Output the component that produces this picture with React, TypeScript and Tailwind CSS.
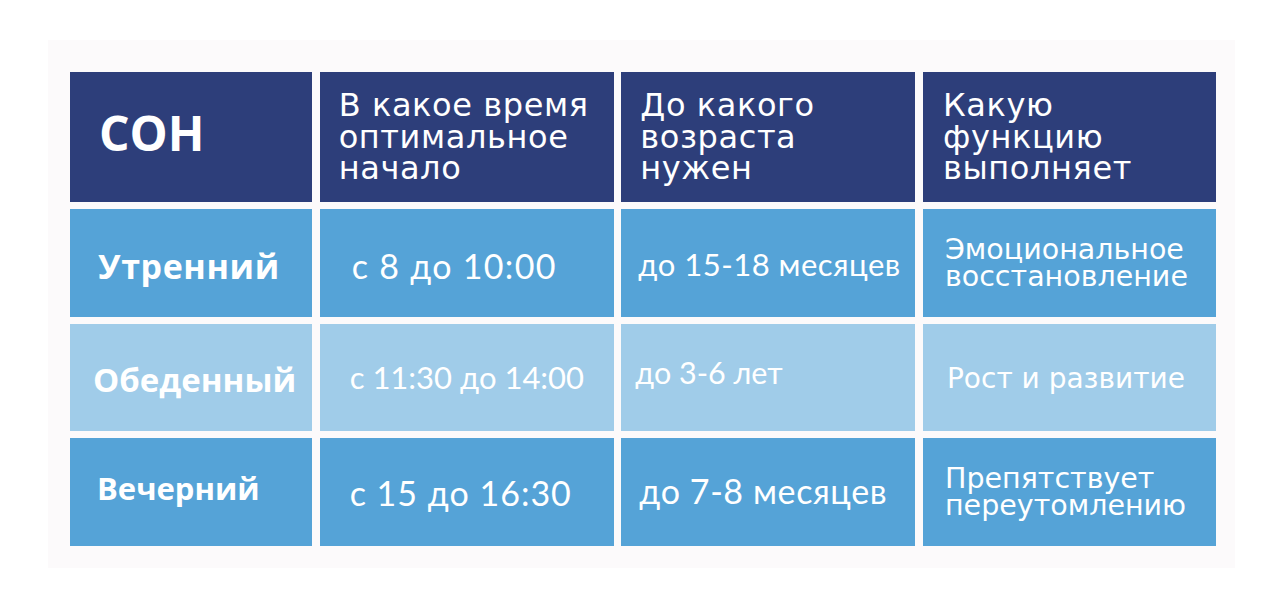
import React from "react";

type Cell = {
  text: string[];
  className: string;
  font: "head" | "bold" | "calibri" | "verdana";
};

const fontClass = {
  head: "font-['DejaVu_Sans',sans-serif] text-[32px] leading-[31.5px] tracking-[0.6px]",
  bold: "font-['Open_Sans',sans-serif] font-bold leading-[40px]",
  calibri: "font-['Lato',sans-serif] leading-[38px]",
  verdana: "font-['DejaVu_Sans',sans-serif] text-[28.5px] leading-[27px]",
};

const rows: { bg: string; cells: Cell[] }[] = [
  {
    bg: "bg-[#2d3e7a]",
    cells: [
      {
        text: ["СОН"],
        font: "bold",
        className: "pl-[29px] items-center pb-[8px] text-[48px]",
      },
      {
        text: ["В какое время", "оптимальное", "начало"],
        font: "head",
        className: "pl-[19px] pt-[18px]",
      },
      {
        text: ["До какого", "возраста", "нужен"],
        font: "head",
        className: "pl-[19px] pt-[18px]",
      },
      {
        text: ["Какую", "функцию", "выполняет"],
        font: "head",
        className: "pl-[20px] pt-[18px]",
      },
    ],
  },
  {
    bg: "bg-[#55a3d7]",
    cells: [
      {
        text: ["Утренний"],
        font: "bold",
        className: "pl-[28px] items-center pt-[6px] text-[34px] tracking-[0.6px]",
      },
      {
        text: ["с 8 до 10:00"],
        font: "calibri",
        className: "pl-[32px] items-center pt-[6px] text-[34px] tracking-[1.3px]",
      },
      {
        text: ["до 15-18 месяцев"],
        font: "calibri",
        className: "pl-[17px] items-center pt-[2px] text-[31px] tracking-[0.5px]",
      },
      {
        text: ["Эмоциональное", "восстановление"],
        font: "verdana",
        className: "pl-[22px] items-center",
      },
    ],
  },
  {
    bg: "bg-[#a0cce9]",
    cells: [
      {
        text: ["Обеденный"],
        font: "bold",
        className: "pl-[23px] items-center pt-[4px] text-[33px]",
      },
      {
        text: ["с 11:30 до 14:00"],
        font: "calibri",
        className: "pl-[30px] items-center pb-[2px] text-[31px]",
      },
      {
        text: ["до 3-6 лет"],
        font: "calibri",
        className: "pl-[14px] items-center pb-[12px] text-[30.5px]",
      },
      {
        text: ["Рост и развитие"],
        font: "verdana",
        className: "pl-[24px] items-center pt-[2px] !text-[28px]",
      },
    ],
  },
  {
    bg: "bg-[#55a3d7]",
    cells: [
      {
        text: ["Вечерний"],
        font: "bold",
        className: "pl-[27px] items-center pb-[8px] text-[31px]",
      },
      {
        text: ["с 15 до 16:30"],
        font: "calibri",
        className: "pl-[30px] items-center pt-[2px] text-[34px] tracking-[1px]",
      },
      {
        text: ["до 7-8 месяцев"],
        font: "calibri",
        className: "pl-[18px] items-center pb-[2px] text-[34px] tracking-[0.6px]",
      },
      {
        text: ["Препятствует", "переутомлению"],
        font: "verdana",
        className: "pl-[22px] items-center",
      },
    ],
  },
];

export default function App() {
  return (
    <div className="w-full h-[598px] bg-white pt-[40px] pl-[48px]">
      <div className="w-[1187px] h-[528px] bg-[#fcfafb] pt-[32px] pl-[22px]">
        <div className="grid grid-cols-[242px_294px_294px_293px] grid-rows-[130px_108px_107px_108px] gap-x-[7.67px] gap-y-[7px]">
          {rows.map((row, ri) =>
            row.cells.map((c, ci) => (
              <div
                key={`${ri}-${ci}`}
                className={`${row.bg} flex text-white ${fontClass[c.font]} ${c.className}`}
              >
                <div className="flex flex-col">
                  {c.text.map((t) => (
                    <span key={t} className="whitespace-nowrap">
                      {t}
                    </span>
                  ))}
                </div>
              </div>
            ))
          )}
        </div>
      </div>
    </div>
  );
}
